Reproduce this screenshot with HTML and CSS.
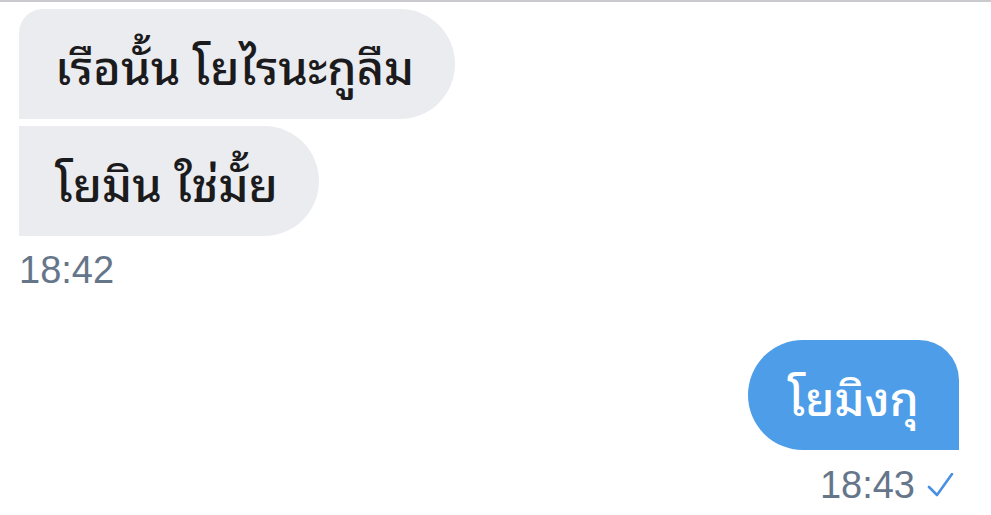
FILE: index.html
```html
<!DOCTYPE html>
<html lang="th">
<head>
    <meta charset="UTF-8">
    <meta name="viewport" content="width=device-width, initial-scale=1.0">
    <title>แชท</title>
    <link rel="stylesheet" href="styles.css">
</head>
<body>
    <main class="chat">
        <!-- Incoming group -->
        <div class="group group-in">
            <div class="bubble bubble-in first">เรือนั้น โยไรนะกูลืม</div>
            <div class="bubble bubble-in last">โยมิน ใช่มั้ย</div>
            <div class="meta">18:42</div>
        </div>

        <!-- Outgoing group -->
        <div class="group group-out">
            <div class="bubble bubble-out">โยมิงกุ</div>
            <div class="meta">
                18:43
                <svg class="tick" width="28" height="24" viewBox="0 0 28 24">
                    <path d="M2 14 L10 22 L25 1" fill="none" stroke="#4a90e2" stroke-width="2.6" stroke-linecap="round" stroke-linejoin="round"/>
                </svg>
            </div>
        </div>
    </main>
</body>
</html>
```

FILE: styles.css
```css
/* Global Styles */
body {
    margin: 0;
    background: #fff;
    font-family: "Noto Sans Thai Looped", "Loma", "Garuda", "Noto Sans Thai", "Noto Sans", sans-serif;
    color: #1b1b1d;
}

.chat {
    border-top: 2px solid #c9cacd;
    padding: 7px 32px 0 19px;
    display: flex;
    flex-direction: column;
}

/* Message groups */
.group {
    display: flex;
    flex-direction: column;
    gap: 7px;
}

.group-in {
    align-items: flex-start;
}

.group-out {
    align-items: flex-end;
    margin-top: 50px;
}

/* Bubbles */
.bubble {
    box-sizing: border-box;
    height: 110px;
    line-height: 110px;
    font-size: 47px;
    font-weight: 500;
    white-space: nowrap;
}

.bubble-in {
    background: #ebecef;
    padding: 0 41px 0 36px;
}

.bubble-in.first {
    border-radius: 24px 55px 55px 0;
}

.bubble-in.last {
    border-radius: 0 55px 55px 0;
}

.bubble-out {
    background: #4d9de8;
    color: #fff;
    padding: 0 40px 0 40px;
    border-radius: 55px 40px 0 55px;
}

/* Time stamps */
.meta {
    font-family: "Liberation Sans", Arial, sans-serif;
    font-size: 38px;
    line-height: 40px;
    color: #66768a;
    display: flex;
    align-items: center;
    gap: 12px;
    margin-top: 7px;
}

.group-out .meta {
    margin-top: 8px;
    margin-right: 4px;
}

.tick {
    display: block;
}
```
